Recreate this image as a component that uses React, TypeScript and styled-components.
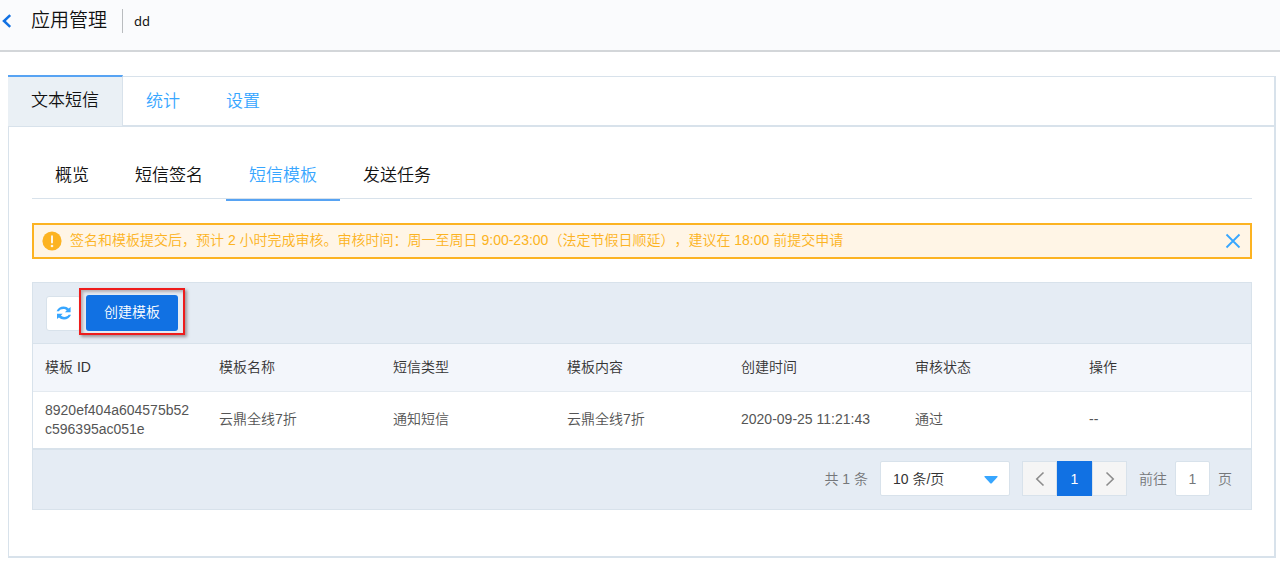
import React, { useState } from "react";
import styled, { createGlobalStyle, css } from "styled-components";

const color = {
  line: "#d8e2eb",
  link: "#37a6ff",
  accent: "#57a3f3",
  primary: "#1171e3",
  panel: "#e5ecf4",
  warn: "#fcb322",
  text: "#111",
  muted: "#75777a",
};

const GlobalStyle = createGlobalStyle`
  *, *::before, *::after { box-sizing: border-box; }
  body {
    margin: 0;
    background: #fff;
    color: ${color.text};
    font-family: "Liberation Sans", "Noto Sans CJK SC", sans-serif;
    font-size: 14px;
    font-weight: 350;
    line-height: 20px;
    text-spacing-trim: space-all;
  }
  button, input, select { font: inherit; color: inherit; margin: 0; padding: 0; }
  button { cursor: pointer; background: none; border: 0; }
  svg { display: block; }
`;

const Header = styled.header`
  display: flex;
  align-items: center;
  height: 52px;
  padding: 0 0 8px;
  background: #fafbfd;
  border-bottom: 2px solid #d3d6d9;
`;

const BackLink = styled.a`
  flex: none;
  width: 31px;
  padding-left: 2px;
  color: ${color.primary};
`;

const Title = styled.h1`
  margin: 0;
  padding-right: 15px;
  font-size: 19px;
  line-height: 24px;
  font-weight: 350;
`;

const AppName = styled.span`
  padding-left: 11px;
  border-left: 1px solid #b9bcbf;
  font-family: "Noto Sans", sans-serif;
  font-size: 13px;
  font-weight: 400;
  line-height: 24px;
`;

const Card = styled.main`
  margin: 24px 4px 4px 8px;
  border: 1px solid ${color.line};
  border-right-width: 2px;
  border-bottom-width: 2px;
`;

const MainTabs = styled.nav`
  display: flex;
  height: 50px;
  border-bottom: 2px solid ${color.line};
`;

const MainTab = styled.button<{ $active: boolean }>`
  padding: 2px 23px 0;
  font-size: 17px;
  color: ${color.link};
  ${(p) =>
    p.$active &&
    css`
      height: 51px;
      margin: -2px 0 -2px -1px;
      padding: 0 23px 2px;
      color: ${color.text};
      background: #eaf0f5;
      border-top: 2px solid ${color.accent};
      border-right: 1px solid ${color.line};
    `}
`;

const Body = styled.div`
  padding: 24px 22px 46px 23px;
`;

const SubTabs = styled.nav`
  display: flex;
  height: 48px;
  margin-bottom: 24px;
  border-bottom: 1px solid ${color.line};
`;

const SubTab = styled.button<{ $active: boolean }>`
  height: 50px;
  padding: 2px 23px 0;
  font-size: 17px;
  color: ${(p) => (p.$active ? color.link : color.text)};
  border-bottom: 2px solid ${(p) => (p.$active ? color.accent : "transparent")};
`;

const Notice = styled.div`
  display: flex;
  align-items: center;
  height: 36px;
  margin-bottom: 23px;
  padding: 0 9px 0 8px;
  gap: 8px;
  color: ${color.warn};
  background: #fff5e6;
  border: 2px solid ${color.warn};
`;

const NoticeText = styled.p`
  flex: 1;
  margin: 0;
  padding-bottom: 2px;
`;

const CloseButton = styled.button`
  color: ${color.link};
`;

const Panel = styled.section`
  background: ${color.panel};
  border: 1px solid ${color.line};
`;

const Toolbar = styled.div`
  display: flex;
  align-items: center;
  height: 60px;
  padding: 0 13px;
  gap: 5px;
`;

const RefreshButton = styled.button`
  display: flex;
  align-items: center;
  justify-content: center;
  width: 35px;
  height: 35px;
  color: ${color.link};
  background: #fff;
  border: 1px solid ${color.line};
  border-radius: 3px;
`;

const CreateButton = styled.button`
  position: relative;
  height: 36px;
  padding: 0 18px 2px;
  color: #fff;
  background: ${color.primary};
  border-radius: 3px;

  &::after {
    content: "";
    position: absolute;
    inset: -7px -7px -4px;
    border: 2px solid #ee1c1c;
    box-shadow: 2px 2px 3px rgba(90, 60, 60, 0.5), inset 2px 2px 3px rgba(90, 60, 60, 0.35);
  }
`;

const Table = styled.table`
  width: 100%;
  table-layout: fixed;
  border-collapse: collapse;
  background: #fff;
`;

const HeadCell = styled.th`
  height: 48px;
  padding: 0 12px 2px;
  text-align: left;
  font-weight: 350;
  color: #333;
  background: #f3f6fb;
  border-top: 1px solid ${color.line};
  border-bottom: 1px solid #e4eaf0;
`;

const Cell = styled.td`
  height: 57px;
  padding: 0 12px;
  line-height: 19px;
  color: #555;
  word-break: break-all;
  border-bottom: 2px solid ${color.line};
`;

const Footer = styled.div`
  display: flex;
  align-items: center;
  justify-content: flex-end;
  height: 59px;
  padding: 0 19px 1px 18px;
  gap: 12px;
  color: ${color.muted};
`;

const SelectBox = styled.div`
  position: relative;
  width: 130px;
  color: ${color.link};

  svg {
    position: absolute;
    right: 12px;
    top: 15px;
    pointer-events: none;
  }
`;

const PageSize = styled.select`
  display: block;
  appearance: none;
  width: 100%;
  height: 35px;
  padding: 0 12px;
  color: #333;
  background: #fff;
  border: 1px solid ${color.line};
  border-radius: 2px;
`;

const Pager = styled.div`
  display: flex;
  height: 35px;
`;

const PageButton = styled.button<{ $current?: boolean }>`
  display: flex;
  align-items: center;
  justify-content: center;
  width: 35px;
  color: ${(p) => (p.$current ? "#fff" : "#8c8c8c")};
  background: ${(p) => (p.$current ? color.primary : "#f5f5f5")};
  border: 1px solid ${(p) => (p.$current ? color.primary : color.line)};
`;

const Jump = styled.label`
  display: flex;
  align-items: center;
  gap: 8px;
`;

const JumpInput = styled.input`
  width: 35px;
  height: 35px;
  text-align: center;
  background: #fff;
  border: 1px solid ${color.line};
  border-radius: 2px;
`;

const BackIcon = () => (
  <svg width="10" height="14" viewBox="0 0 10 14" fill="none" stroke="currentColor" strokeWidth="2.5">
    <path d="M8.2 1.2 2 7l6.2 5.8" />
  </svg>
);

const RefreshIcon = () => (
  <svg width="16" height="14" viewBox="0 0 16 14" fill="currentColor">
    <path d="M.6 5.2C1.8 2.2 4.4.5 7.6.5c2.1 0 3.8.8 5.1 2L14.6.9v5.4H8.9l1.8-1.9C9.8 3.5 8.7 3 7.4 3 5.2 3 3.800 3.900 3 5.200z" />
    <path d="M15 8.800c-1.200 3-3.800 4.700-7 4.700-2.100 0-3.800-.8-5.100-2L1 13.100V7.700h5.700L4.900 9.600c.9.900 2 1.400 3.300 1.400 2.200 0 3.600-.9 4.400-2.200z" />
  </svg>
);

const AlertIcon = () => (
  <svg width="20" height="20" viewBox="0 0 20 20">
    <circle cx="10" cy="10" r="9.6" fill="#fcb322" />
    <rect x="9" y="4.2" width="2" height="8.4" rx="1" fill="#fff5e6" />
    <circle cx="10" cy="15" r="1.3" fill="#fff5e6" />
  </svg>
);

const CloseIcon = () => (
  <svg width="16" height="16" viewBox="0 0 16 16" fill="none" stroke="currentColor" strokeWidth="1.8">
    <path d="M1.5 1.5l13 13M14.5 1.5l-13 13" />
  </svg>
);

const ChevronIcon = ({ d }: { d: string }) => (
  <svg width="10" height="16" viewBox="0 0 10 16" fill="none" stroke="currentColor" strokeWidth="1.6">
    <path d={d} />
  </svg>
);

const mainTabs = ["文本短信", "统计", "设置"];
const subTabs = ["概览", "短信签名", "短信模板", "发送任务"];
const columns = ["模板 ID", "模板名称", "短信类型", "模板内容", "创建时间", "审核状态", "操作"];
const rows = [
  ["8920ef404a604575b52c596395ac051e", "云鼎全线7折", "通知短信", "云鼎全线7折", "2020-09-25 11:21:43", "通过", "--"],
];

export default function App() {
  const [mainTab, setMainTab] = useState(0);
  const [subTab, setSubTab] = useState(2);
  const [noticeOpen, setNoticeOpen] = useState(true);

  return (
    <>
      <GlobalStyle />
      <Header>
        <BackLink href="#" aria-label="返回">
          <BackIcon />
        </BackLink>
        <Title>应用管理</Title>
        <AppName>dd</AppName>
      </Header>
      <Card>
        <MainTabs>
          {mainTabs.map((name, i) => (
            <MainTab key={name} $active={i === mainTab} onClick={() => setMainTab(i)}>
              {name}
            </MainTab>
          ))}
        </MainTabs>
        <Body>
          <SubTabs>
            {subTabs.map((name, i) => (
              <SubTab key={name} $active={i === subTab} onClick={() => setSubTab(i)}>
                {name}
              </SubTab>
            ))}
          </SubTabs>
          {noticeOpen && (
            <Notice>
              <AlertIcon />
              <NoticeText>
                签名和模板提交后，预计 2 小时完成审核。审核时间：周一至周日 9:00-23:00（法定节假日顺延），建议在 18:00 前提交申请
              </NoticeText>
              <CloseButton aria-label="关闭" onClick={() => setNoticeOpen(false)}>
                <CloseIcon />
              </CloseButton>
            </Notice>
          )}
          <Panel>
            <Toolbar>
              <RefreshButton aria-label="刷新">
                <RefreshIcon />
              </RefreshButton>
              <CreateButton>创建模板</CreateButton>
            </Toolbar>
            <Table>
              <thead>
                <tr>
                  {columns.map((name) => (
                    <HeadCell key={name} scope="col">
                      {name}
                    </HeadCell>
                  ))}
                </tr>
              </thead>
              <tbody>
                {rows.map((row) => (
                  <tr key={row[0]}>
                    {row.map((value, i) => (
                      <Cell key={columns[i]}>{value}</Cell>
                    ))}
                  </tr>
                ))}
              </tbody>
            </Table>
            <Footer>
              <span>共 1 条</span>
              <SelectBox>
                <PageSize aria-label="每页条数" defaultValue="10">
                  <option value="10">10 条/页</option>
                  <option value="20">20 条/页</option>
                  <option value="50">50 条/页</option>
                </PageSize>
                <svg width="14" height="8" viewBox="0 0 14 8" fill="currentColor">
                  <path d="M1 0h12q1 0 .5 1L8 7q-1 1-2 0L.5 1Q0 0 1 0z" />
                </svg>
              </SelectBox>
              <Pager>
                <PageButton aria-label="上一页">
                  <ChevronIcon d="M8.5 1.500 1.800 8l6.700 6.500" />
                </PageButton>
                <PageButton $current>1</PageButton>
                <PageButton aria-label="下一页">
                  <ChevronIcon d="M1.500 1.500 8.200 8l-6.700 6.500" />
                </PageButton>
              </Pager>
              <Jump>
                前往
                <JumpInput defaultValue="1" />页
              </Jump>
            </Footer>
          </Panel>
        </Body>
      </Card>
    </>
  );
}
